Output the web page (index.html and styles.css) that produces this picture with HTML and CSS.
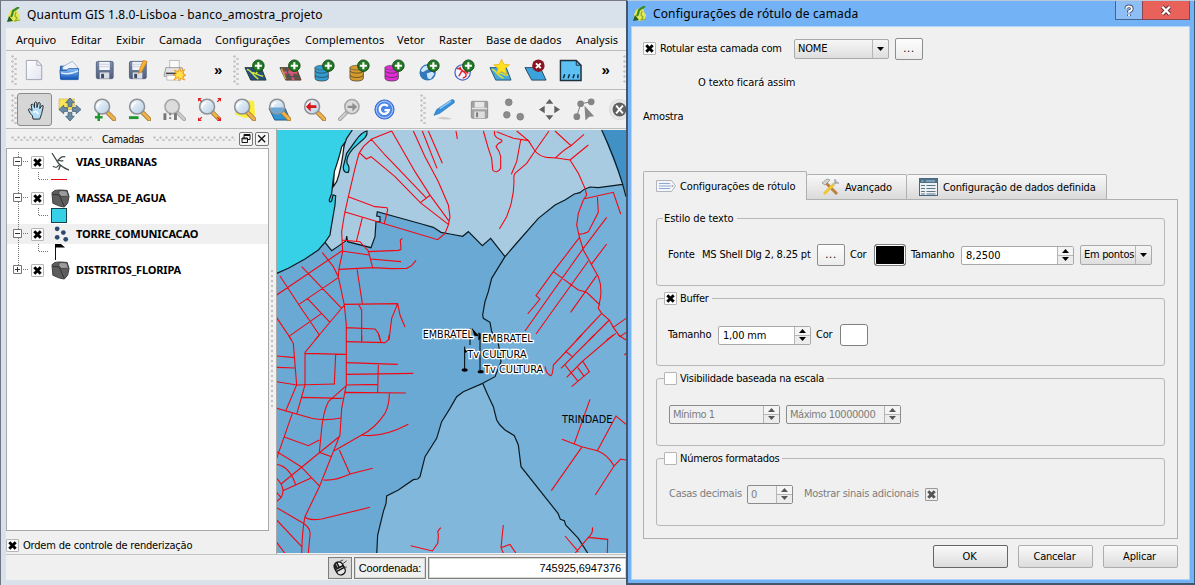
FILE: index.html
```html
<!DOCTYPE html>
<html lang="pt-BR">
<head>
<meta charset="utf-8">
<title>Quantum GIS 1.8.0-Lisboa - banco_amostra_projeto</title>
<link rel="stylesheet" href="styles.css">
</head>
<body>
<svg class="defs" width="0" height="0">
  <defs>
    <linearGradient id="gLens" x1="0" y1="0" x2="1" y2="1"><stop offset="0" stop-color="#fafdff"/><stop offset="1" stop-color="#b5cde4"/></linearGradient>
    <linearGradient id="gBlue" x1="0" y1="0" x2="0" y2="1"><stop offset="0" stop-color="#8fc3f5"/><stop offset="1" stop-color="#0b50b8"/></linearGradient>
    <linearGradient id="gDisk" x1="0" y1="0" x2="0" y2="1"><stop offset="0" stop-color="#7f90ae"/><stop offset="1" stop-color="#4b5c7d"/></linearGradient>
    <linearGradient id="gPage" x1="0" y1="0" x2="1" y2="1"><stop offset="0" stop-color="#fff"/><stop offset="1" stop-color="#e2e4ef"/></linearGradient>
    <symbol id="qgis" viewBox="0 0 14 16">
      <path d="M3 4 6 2 10 2 11 6 13 9 12 13 8 15 3 14 1 9Z" fill="#e6e85a"/>
      <path d="M12 0 9 2 6 4 5 8 4 10" fill="none" stroke="#3c8a26" stroke-width="2.2"/>
      <path d="M9 5 8 9 10 11 8 14 13 13" fill="none" stroke="#8fae2b" stroke-width="1.2"/>
      <path d="M0 15 2 9 6 14Z" fill="#245f22"/>
    </symbol>
    <symbol id="plus" viewBox="0 0 14 14"><circle cx="7" cy="7" r="6" fill="#237a24" stroke="#124713"/><path d="M7 3.3v7.4M3.3 7h7.4" stroke="#fff" stroke-width="2.2"/></symbol>
    <symbol id="db" viewBox="0 0 24 24">
      <path d="M2 9v11c0 4 14 4 14 0V9Z" fill="currentColor" stroke="#454545" stroke-width=".8"/>
      <path d="M2 12.5c2 3 12 3 14 0M2 17c2 3 12 3 14 0" fill="none" stroke="#333" stroke-width=".7"/>
      <ellipse cx="9" cy="9" rx="7" ry="2.4" fill="currentColor" stroke="#555" stroke-width=".7"/>
      <use href="#plus" x="9" y="0" width="14" height="14"/>
    </symbol>
    <symbol id="lens" viewBox="0 0 24 24">
      <path d="M15 15 22 22" stroke="#9c7a3c" stroke-width="4.6" stroke-linecap="round"/>
      <path d="M15.5 15.5 22 22" stroke="#f2b24a" stroke-width="3" stroke-linecap="round"/>
      <circle cx="9.5" cy="9" r="7.8" fill="url(#gLens)" stroke="#8e9296" stroke-width="1.6"/>
      <path d="M4.5 10a5 5 0 0 1 4-5" fill="none" stroke="#fff" stroke-width="1.6"/>
    </symbol>
    <symbol id="lensGrey" viewBox="0 0 24 24">
      <path d="M15 15 22 22" stroke="#a2a2a2" stroke-width="4" stroke-linecap="round"/>
      <path d="M16 16 22 22" stroke="#cfcfcf" stroke-width="2.2" stroke-linecap="round"/>
      <circle cx="9.5" cy="9" r="7.4" fill="#dcdcdc" stroke="#a6a6a6" stroke-width="1.6"/>
    </symbol>
    <symbol id="disk" viewBox="0 0 24 24">
      <rect x="3.5" y="2.500" width="17.500" height="18" rx="1.500" fill="url(#gDisk)" stroke="#55627c"/>
      <rect x="6.500" y="3" width="11" height="8.500" fill="#f3f5fa"/><path d="M7 5.500h10M7 8h10" stroke="#c8cedb"/>
      <rect x="7" y="14" width="10" height="6.500" fill="#d9dde6"/><rect x="8.500" y="15.500" width="3" height="4.500" fill="#3f4a62"/>
    </symbol>
    <symbol id="poly" viewBox="0 0 20 20">
      <path d="M1 4 4 1.500 9 1 17 1.500 19 8 17.500 15 14 19 9 18 2 15Z" fill="#5d5d5d" stroke="#3a3a3a"/>
      <path d="M9 1.500 16.500 2 18.500 7.500 11 8 8 5Z" fill="#9b9b9b" stroke="#3a3a3a" stroke-width=".8"/>
      <path d="M2 6Q9 5 10 9T14 18" fill="none" stroke="#2d2d2d"/>
    </symbol>
    <symbol id="cross" viewBox="0 0 9 9"><path d="M1.300 1.300 7.700 7.700M7.700 1.300 1.300 7.700" stroke="currentColor" stroke-width="2.900"/></symbol>
    <symbol id="up" viewBox="0 0 7 4"><path d="M0 4 3.500 0 7 4Z" fill="currentColor"/></symbol>
    <symbol id="down" viewBox="0 0 7 4"><path d="M0 0 3.500 4 7 0Z" fill="currentColor"/></symbol>
  </defs>
</svg>

<div class="desktop">
<main class="window">
  <header class="titlebar"><svg class="appicon" width="14" height="16"><use href="#qgis"/></svg><span class="wintitle">Quantum GIS 1.8.0-Lisboa - banco_amostra_projeto</span></header>
  <nav class="menubar"><span>Arquivo</span><span>Editar</span><span>Exibir</span><span>Camada</span><span>Configurações</span><span>Complementos</span><span>Vetor</span><span>Raster</span><span>Base de dados</span><span>Analysis</span></nav>

  <div class="toolbar">
    <i class="grip"></i>
    <span class="tool"><svg viewBox="0 0 24 24"><path d="M3.500 1.500h11l5 5v15h-16Z" fill="url(#gPage)" stroke="#a0a3b5"/><path d="M14.500 1.500v5h5Z" fill="#fff" stroke="#a0a3b5"/></svg></span>
    <span class="tool"><svg viewBox="0 0 24 24"><path d="M2.500 7.500h7l2 2h9v11h-18Z" fill="#2e74c8" stroke="#1d55a5"/><path d="M5 11 5 8 15 2.500 20 8V12Z" fill="#f1f5fb" stroke="#90a4c4" stroke-width=".8"/><path d="M2 12h7l2-2h10.500l-.5 11.500H3Z" fill="url(#gBlue)" stroke="#1d55a5" stroke-width=".8"/><path d="M3 14.500Q12 17 21 12.500" fill="none" stroke="#dcecff" stroke-width="1.500"/></svg></span>
    <span class="tool"><svg viewBox="0 0 24 24"><use href="#disk"/></svg></span>
    <span class="tool"><svg viewBox="0 0 24 24"><use href="#disk" x="-2"/><path d="M11 15 12 11 16 1.500 20 2.500 14.500 13Z" fill="#f6b53a" stroke="#d07f12" stroke-width=".8"/></svg></span>
    <span class="tool"><svg viewBox="0 0 24 24"><rect x="7" y="1.500" width="10" height="9" fill="#fafafa" stroke="#bbb"/><path d="M3 9h17l2 9H1Z" fill="#e4e4e4" stroke="#888" stroke-width=".8"/><path d="M3 15h14" stroke="#444" stroke-width="1.600"/><path d="M4 17h14v5H4Z" fill="#fff" stroke="#999" stroke-width=".6"/><path d="m17.500 9 1 4 4-2-2 4 3.500 2-3.500 1 2 4-4-2-1.500 3-1-4-4.500 3 2-4-3-1.500 3.500-1-2-4 4 2Z" fill="#ffe14a" stroke="#f09a1a" stroke-width="1"/></svg></span>
    <span class="more first">»</span>
    <i class="grip"></i>
    <span class="tool"><svg viewBox="0 0 24 24"><path d="M1 9h17l5 13H7Z" fill="#244f7c" stroke="#263b33"/><path d="M3 11c4 0 7 7 12 10M8 14c4 0 5 3 12 4M14 10l-1 6" fill="none" stroke="#d2e33c" stroke-width="1.600"/><use href="#plus" x="8" y="0" width="14" height="14"/></svg></span>
    <span class="tool"><svg viewBox="0 0 24 24"><path d="M1 9h17l5 13H7Z" fill="#73513b" stroke="#4c4236"/><path d="M5 14h14M11 9l4 13" stroke="#d6587b" stroke-width="2.600"/><path d="M7 18.500h14M7 9l5 13" stroke="#3f5560" stroke-width="1.300"/><path d="M2.500 10 7 21" stroke="#d3a85a" stroke-width="1.500"/><use href="#plus" x="9" y="0" width="14" height="14"/></svg></span>
    <span class="tool db-blue"><svg viewBox="0 0 24 24"><use href="#db" x="-1" width="24" height="24"/></svg></span>
    <span class="tool db-gold"><svg viewBox="0 0 24 24"><use href="#db" x="-1" width="24" height="24"/></svg></span>
    <span class="tool db-pink"><svg viewBox="0 0 24 24"><use href="#db" x="-1" width="24" height="24"/></svg></span>
    <span class="tool"><svg viewBox="0 0 24 24"><circle cx="9" cy="14" r="8.500" fill="#3378b8"/><path d="M2 12c2-5 6-6 8-4s-1 3-3 4-3 3-5 0ZM8 15l6-2 2 3-4 5-3-1Z" fill="#cfe6f7"/><use href="#plus" x="8" y="0" width="14" height="14"/></svg></span>
    <span class="tool"><svg viewBox="0 0 24 24"><circle cx="9" cy="14" r="8" fill="#f2f5ff" stroke="#4665c4" stroke-width="1.300"/><path d="M3 10c4-1 5 2 8 4s2 5-2 6M6 8l2 5-3 5M11 12l4 3" fill="none" stroke="#e8192c" stroke-width="1.500"/><use href="#plus" x="8" y="0" width="14" height="14"/></svg></span>
    <span class="tool"><svg viewBox="0 0 24 24"><path d="M1 9h17l5 13H7Z" fill="#45a9dd" stroke="#285774"/><path d="M3 11c4 0 6 7 12 9M9 14c4 0 5 3 11 3" fill="none" stroke="#d8e53e" stroke-width="1.600"/><path d="m13 0 2.500 5.500 6 .5-4.500 4 1.500 6-5.500-3-5 3 1.500-6L5 6l6-.5Z" fill="#ffe11f" stroke="#e9b51c" stroke-width=".8"/></svg></span>
    <span class="tool"><svg viewBox="0 0 24 24"><path d="M1 9h16l6 13H8Z" fill="#3aa3dd" stroke="#2b4658"/><circle cx="15" cy="7" r="6.500" fill="#8c1420"/><path d="m12.500 4.500 5 5M17.500 4.500l-5 5" stroke="#fff" stroke-width="2"/></svg></span>
    <span class="tool"><svg viewBox="0 0 24 24"><path d="M1.500 1.500H18l5 5v16H1.500Z" fill="#5cc0f3" stroke="#1c2f3a" stroke-width="1.500"/><path d="M18 1.500V6.500h5" fill="none" stroke="#1c2f3a"/><path d="M6 16l-1.500 4M11 16l-1.500 4M16 16l-1.500 4M20 16l-.5 4" stroke="#102f45" stroke-width="1.600"/></svg></span>
    <span class="more">»</span>
    <i class="grip"></i>
  </div>

  <div class="toolbar">
    <i class="grip"></i>
    <span class="tool pressed"><svg viewBox="0 0 24 24"><path d="M9 22Q9 18 6 16L4 12Q5 10 8 13L7 7Q8 5 10 8L10.500 10V5Q12 3 13 5V10L14.500 5Q16 4 16.500 6L16 11 18 8Q20 7 19.500 9.500L18 16 16 22Z" transform="translate(1.500 0)" fill="#b4dff8" stroke="#22262a" stroke-width="1"/><path d="M11 15c3-2 4 0 5 2" fill="none" stroke="#fff" stroke-width="1.500"/></svg></span>
    <span class="tool"><svg viewBox="0 0 24 24"><path d="M1 1h16v11H1Z" fill="#fbe35a" stroke="#b99a2b" stroke-width=".7" stroke-dasharray="2 1"/><path d="m12.500 0 4.500 5h-2.500v4h-4V5H8ZM12.500 24l4.500-5h-2.500v-4h-4v4H8ZM1 12l5-4.500V10h4v4H6v2.500ZM24 12l-5-4.500V10h-4v4h4v2.500Z" fill="#6b8ba4" stroke="#3f5d75" stroke-width=".8"/></svg></span>
    <span class="tool"><svg viewBox="0 0 24 24"><use href="#lens"/><path d="M6 16v8M2 20h8" stroke="#22962f" stroke-width="2.600"/></svg></span>
    <span class="tool"><svg viewBox="0 0 24 24"><use href="#lens"/><path d="M1 20.500h10" stroke="#22962f" stroke-width="3"/></svg></span>
    <span class="tool"><svg viewBox="0 0 24 24"><use href="#lensGrey"/><path d="M2 16v7M13 16v7" stroke="#777" stroke-width="3"/><path d="M7.500 16v2M7.500 20v2" stroke="#777" stroke-width="2"/></svg></span>
    <span class="tool"><svg viewBox="0 0 24 24"><use href="#lens"/><path d="M1 1l3 3M23 1l-3 3M1 23l3-3M23 23l-3-3" stroke="#e12020" stroke-width="1.300"/><path d="M0 0h4L0 4ZM24 0v4l-4-4ZM0 24v-4l4 4ZM24 24h-4l4-4Z" fill="#e12020"/></svg></span>
    <span class="tool"><svg viewBox="0 0 24 24"><path d="M6 2 22 3 23 18 13 21 2 17 2 8Z" fill="#faee36"/><use href="#lens"/></svg></span>
    <span class="tool"><svg viewBox="0 0 24 24"><path d="M1 11h17l5 12H7Z" fill="#2b95d6" stroke="#285a7c"/><use href="#lens"/><path d="M2.500 10h14Q15 16 9.500 16T2.500 10Z" fill="#6ea6d4"/></svg></span>
    <span class="tool"><svg viewBox="0 0 24 24"><use href="#lens"/><path d="m3 9 5-5v3.500h6v3H8V14Z" fill="#d61717"/></svg></span>
    <span class="tool"><svg viewBox="0 0 24 24"><g transform="matrix(-1 0 0 1 24 0)"><use href="#lensGrey"/></g><path d="m20 9-5-4v3h-5v2.500h5V14Z" fill="#8c8c8c"/></svg></span>
    <span class="tool"><svg viewBox="0 0 24 24"><circle cx="12" cy="12" r="10" fill="#4b85e6" stroke="#3a66cf"/><circle cx="12" cy="12" r="8.500" fill="none" stroke="#b4d0ff" stroke-width="1"/><path d="M15.500 8.700A4.800 4.800 0 1 0 16.500 12.700H12" fill="none" stroke="#fff" stroke-width="2.400"/></svg></span>
    <i class="grip wide"></i>
    <span class="tool"><svg viewBox="0 0 24 24"><path d="M4 21q9-3 16 1-8 1-16-1Z" fill="#ccc"/><path d="M1 18 4 12 19 2Q23 1 22 5L7 16Z" fill="#3491dd" stroke="#1d6db2" stroke-width=".7"/><path d="M7 11 19 3" stroke="#8cc8f3" stroke-width="1.600"/></svg></span>
    <span class="tool"><svg viewBox="0 0 24 24"><rect x="3.500" y="3.500" width="17" height="17.500" rx="1" fill="#a2a2a2" stroke="#8c8c8c"/><rect x="7" y="4" width="10" height="6" fill="#e6e6e6"/><path d="M4 11h16" stroke="#e4e4e4" stroke-width="1.500"/><rect x="6.500" y="14" width="11" height="7" fill="#dedede"/><path d="M9.500 15v5" stroke="#777" stroke-width="2"/></svg></span>
    <span class="tool"><svg viewBox="0 0 24 24"><g fill="#8c8c8c" stroke="#757575" stroke-width=".6"><circle cx="6" cy="4.500" r="3.600"/><circle cx="4" cy="17.500" r="3.500"/><circle cx="18" cy="19.500" r="3.600"/></g></svg></span>
    <span class="tool"><svg viewBox="0 0 24 24"><path d="m12 1 4 5H8ZM12 23l4-5H8ZM1 12l6-4v8ZM23 12l-6-4v8Z" fill="#606060"/></svg></span>
    <span class="tool"><svg viewBox="0 0 24 24"><path d="M4 19 8 6 19 4" fill="none" stroke="#777"/><g fill="#858585"><circle cx="8" cy="6" r="3.500"/><circle cx="19" cy="4" r="3.500"/><circle cx="4" cy="19.500" r="3.500"/><path d="m12 8 10 11-5 .5-4 4Z"/></g></svg></span>
    <span class="tool"><svg viewBox="0 0 24 24"><circle cx="12" cy="12" r="10.500" fill="#e6e6e6" stroke="#d6d6d6"/><circle cx="12" cy="12" r="7.200" fill="#606060"/><path d="m8.500 8 7 8M15.500 8l-7 8" stroke="#fff" stroke-width="2"/></svg></span>
  </div>

  <div class="workspace">
    <aside class="dock">
      <div class="dockhead"><i class="dots"></i><span>Camadas</span><i class="dots"></i>
        <b class="dockbtn"><svg viewBox="0 0 12 12"><path d="M4 1.500h6v5H4ZM4 2.500h6" fill="none" stroke="#111"/><path d="M2 5h5.500v4.500H2ZM2 5.800h5" fill="#f4f4f4" stroke="#111"/></svg></b>
        <b class="dockbtn"><svg viewBox="0 0 12 12"><path d="m2.200 2.200 7 7M9.200 2.200l-7 7" stroke="#111" stroke-width="1.300"/></svg></b>
      </div>
      <div class="tree">
        <div class="node"><svg class="twig" width="24" height="20"><path d="M11.500 0V20M12 9.500H22" class="dot"/><path d="M6.500 5.500h8v8h-8Z" class="box"/><path d="M8 9.500h5" class="sign"/></svg><b class="check"><svg><use href="#cross"/></svg></b><svg class="licon" viewBox="0 0 20 20"><path d="M1 0 6 8Q9 14 19 18M7 9Q10 3 15 4M7 7Q9 9 13 8M9 11Q7 17 2 14M10 13 8 18" fill="none" stroke="#3e4b48" stroke-width="1.300"/></svg><span>VIAS_URBANAS</span></div>
        <div class="legend"><svg width="60" height="16"><path d="M11.500 0V16M31.500 0V7.500H42" class="dot"/><path d="M44 7.500h16" stroke="#f00014" stroke-width="1"/></svg></div>
        <div class="node"><svg class="twig" width="24" height="20"><path d="M11.500 0V20M12 9.500H22" class="dot"/><path d="M6.500 5.500h8v8h-8Z" class="box"/><path d="M8 9.500h5" class="sign"/></svg><b class="check"><svg><use href="#cross"/></svg></b><svg class="licon"><use href="#poly"/></svg><span>MASSA_DE_AGUA</span></div>
        <div class="legend"><svg width="60" height="16"><path d="M11.500 0V16M31.500 0V7.500H42" class="dot"/><rect x="44.500" y=".5" width="15" height="14" fill="#36d0e7" stroke="#17424a"/></svg></div>
        <div class="node selected"><svg class="twig" width="24" height="20"><path d="M11.500 0V20M12 9.500H22" class="dot"/><path d="M6.500 5.500h8v8h-8Z" class="box"/><path d="M8 9.500h5" class="sign"/></svg><b class="check"><svg><use href="#cross"/></svg></b><svg class="licon" viewBox="0 0 20 20"><g fill="#2b4a6d"><circle cx="6.500" cy="4" r="2.500"/><circle cx="13" cy="8" r="2.500"/><circle cx="6.500" cy="13" r="2.500"/><circle cx="15.500" cy="15" r="2.500"/></g></svg><span>TORRE_COMUNICACAO</span></div>
        <div class="legend"><svg width="60" height="16"><path d="M11.500 0V16M31.500 0V7.500H42" class="dot"/><path d="M48.500 0V16" stroke="#111"/><path d="M48 0h6l4 3.500h-10Z" fill="#000"/></svg></div>
        <div class="node"><svg class="twig" width="24" height="20"><path d="M11.500 0V10M12 9.500H22" class="dot"/><path d="M6.500 5.500h8v8h-8Z" class="box"/><path d="M8 9.500h5M10.500 7v5" class="sign"/></svg><b class="check"><svg><use href="#cross"/></svg></b><svg class="licon"><use href="#poly"/></svg><span>DISTRITOS_FLORIPA</span></div>
      </div>
      <div class="order"><b class="check"><svg><use href="#cross"/></svg></b><span>Ordem de controle de renderização</span></div>
    </aside>
    <div class="splitter"></div>
    <svg class="map" viewBox="6 15 1050 1269" width="350" height="423">
      <rect x="3" y="15" width="1060" height="1269" fill="#69a9d4"/>
      <path d="M160 0H1060V205L1043 178 970 188 945 186 930 192 900 207 840 240 790 280 720 360 690 395 647 340 622 362 580 320 563 334 525 327 498 322 475 307 440 297 307 260 305 273 315 275 315 290 303 290 300 335 288 368 218 350 170 377 150 352 120 340Z" fill="#a9cbe2"/>
      <path d="M690 395Q750 320 790 280L840 240 900 207 945 186 970 188 1043 178 1060 205V1290H938L910 1240 870 1190 860 1180 738 1025 730 960 720 935 690 915 670 900 655 845 623 775 660 755 678 710 670 655 650 620 645 592 625 580 623 570 630 530 640 500 650 460Z" fill="#74b0d7"/>
      <path d="M623 775 655 845 670 900 690 915 720 935 730 960 738 1025 860 1180 870 1190 910 1240 938 1290H305L308 1230 325 1160 335 1113 415 1065 435 1055 450 995 485 940 500 890 525 850 545 820 565 800Z" fill="#80b7db"/>
      <path d="M980 15H1060V220L1043 178Z" fill="#4191c6"/>
      <path d="M3 15H232L215 40 208 60 190 110 175 160 170 205 180 210 180 240 168 310 165 330 150 352 130 375 90 402 40 430 3 446Z" fill="#36d0e7"/>
      <g fill="none" stroke="#0c1a20" stroke-width="3.600">
        <path d="M232 15 215 40 208 60 190 110 175 160 170 205 163 224Q162 235 170 228L174 210 182 212 180 240 168 310 165 330 150 352 130 375 90 402 40 430 3 446"/>
        <path d="M208 55Q200 130 185 170L175 185 178 140Q195 90 200 65Z" fill="#fffaf2"/>
        <path d="M276 18Q260 20 240 50L215 85 205 125Q204 145 220 142 226 125 216 115 212 95 235 70L270 38Q278 28 276 18Z" fill="#36d0e7"/>
        <path d="M150 352 170 377 213 348 215 333 218 350 288 368 300 335 303 290 315 290 315 275 305 273 307 260 440 297 475 307 498 322 525 327 563 334 580 320 622 362 647 340 690 395"/>
        <path d="M980 15Q1020 100 1043 178L1053 215M1043 178 970 188 945 186Q930 190 915 203L898 207 870 225 840 240 790 280 720 360 690 395 650 460 640 500 630 530 623 570 625 580 645 592 650 620 670 655 678 710 660 755 623 775"/>
        <path d="M623 775 636 805 655 845 665 885 675 900 690 915 718 932 730 960 738 1025 849 1165 856 1183 868 1187 872 1200 910 1240 938 1284"/>
        <path d="M623 775 565 800 545 815 525 850 500 890 485 940 450 995 435 1055 428 1062 415 1064 370 1095 335 1113 333 1135 325 1160 308 1230 305 1290"/>
      </g>
      <g fill="none" stroke="#f30812" stroke-width="3.300">
        <path d="M350 18 290 42 265 65 252 85 240 130 220 215 208 270 200 320 203 380 192 430 190 455 208 540 214 600V780M252 82 274 102 288 95 360 155 436 233 520 298M288 42 330 90 455 220M436 233 466 210M350 18 420 140 466 212 523 290M415 18 450 95 490 170 520 240 525 275 520 300 510 325 488 344 208 260M442 18 486 130M460 18 502 115M220 215 300 245 336 248 338 255 328 295M262 278 244 350M200 345 255 350 280 378 293 428M200 378 283 390M278 380 370 376 378 373 376 345 382 340M286 402 378 410M192 433 293 428 350 431 395 430 410 422 423 406M142 383 175 425 190 455M5 510 200 378M15 453 72 540 133 630M80 425 200 550M72 538 190 458M97 520 165 592M208 540 120 645M45 632 140 565M5 578 50 645M246 432 262 535M208 538 368 536 375 570 390 606M368 536 350 580 342 645M250 537 260 555V645M214 608 300 612 310 625 315 645"/>
        <path transform="translate(525)" d="M18 18 22 42M100 18 115 70 125 100 128 135Q140 148 152 130V95Q150 80 138 65 142 55 155 50 158 45 148 42 130 35 134 18M140 20 190 40 235 47 200 18M235 47 255 78Q270 95 290 97L320 99 360 105 385 145 405 190 410 210 400 225 385 265 380 300 388 335 400 375 445 455Q455 480 452 515L445 550 455 565 478 585 490 607 510 635 528 622M212 45 200 110 184 148M297 18 255 78 230 115 195 145Q190 150 192 170L190 200 183 238 170 275 148 312M315 18 363 62 402 28M315 100Q340 75 363 62M360 105 415 60M400 222 490 202 512 267M442 212 445 262 415 320Q400 328 385 328M388 338 310 440 258 512 270 522 233 567M470 277 400 370 225 618M415 408 258 627M470 357 424 418M440 452 362 562M310 440 385 495 410 502 450 540M455 565 380 645M478 585 418 645M490 607 528 580M470 645 498 625"/>
        <path transform="translate(0 630)" d="M214 150 200 220 195 300 133 455 90 545Q82 580 80 655M40 0 55 25 65 150 32 228M133 0 90 52V150L65 238M90 55 214 58M182 58 178 147M5 140 65 150 180 147M5 63 58 68M5 97 60 99M214 20 330 23 340 15 342 0M260 0V20M312 0 318 22M214 83 368 88M214 118 415 115M310 90 308 172M214 150 308 148M208 172 393 174M343 174Q343 210 330 235 300 280 260 300L178 347M260 300Q320 310 400 268M214 152 160 200Q145 230 140 280L133 352 170 365M78 187 203 190M5 220 110 250Q150 258 197 249M52 235 5 370M28 306 100 332 133 315M5 350Q40 370 78 395L135 455M195 303 18 447M193 345 225 417M145 435Q180 438 225 417L293 400M5 388Q45 395 62 450M22 468 110 428M5 430Q35 460 18 488L5 500M3 470 18 487M90 545Q100 558 140 552L285 517M5 518 85 565Q108 580 105 600L100 655M5 555 80 635M5 622 30 655M407 632 472 648 488 625Q492 600 488 590L497 578"/>
        <path transform="translate(525 630)" d="M395 0 310 90Q308 120 303 122 290 120 285 95M433 0 333 100M346 48 370 67M490 0 398 78 418 110 365 155M398 78 350 127M345 90 385 140M383 97 403 125M505 0 528 15M528 55l-5 5M420 193 373 325M336 313 395 335 442 347Q475 360 492 393M528 268 498 243 442 347M395 337 304 467M436 480 492 393 512 372 528 375M160 570 153 638 160 655M153 638 180 628 198 655M345 603 385 650M427 577Q430 595 415 607L375 655M415 607 473 613 472 655"/>
      </g>
      <path d="M569 665V735M615 625V735M585 610V660" stroke="#000" stroke-width="3"/>
      <ellipse cx="569" cy="735" rx="9" ry="5"/><ellipse cx="617" cy="740" rx="9" ry="5"/>
      <g class="maplabel">
        <text x="443" y="640" textLength="151" lengthAdjust="spacingAndGlyphs">EMBRATEL</text>
        <text x="621" y="651" textLength="152" lengthAdjust="spacingAndGlyphs">EMBRATEL</text>
        <text x="577" y="699" textLength="178" lengthAdjust="spacingAndGlyphs">Tv CULTURA</text>
        <text x="627" y="744" textLength="178" lengthAdjust="spacingAndGlyphs">Tv CULTURA</text>
        <text x="861" y="894" textLength="151" lengthAdjust="spacingAndGlyphs" class="plain">TRINDADE</text>
      </g>
      <path d="M590 608 606 626 614 634 598 632ZM610 622v24l6-4v-16ZM569 672l9 8-9 4Z"/>
    </svg>
  </div>
  <footer class="status">
    <b class="mouse"><svg viewBox="0 0 20 20"><g transform="rotate(-28 10 10)"><rect x="5" y="3" width="10" height="15" rx="5" fill="#e6e6e6" stroke="#111" stroke-width="1.500"/><path d="M5 9.500h10M5 12h10M10 3v6" stroke="#111" stroke-width="1.600"/><rect x="5.500" y="4" width="3" height="5" fill="#222"/></g><path d="M10 3 14 1M14 5 18 2M15 9h3" stroke="#333"/></svg></b>
    <span class="coordlabel">Coordenada:</span><span class="coord">745925,6947376</span>
  </footer>
</main>

<section class="dialog">
  <header class="dtitle"><svg class="appicon" width="14" height="16"><use href="#qgis"/></svg><span class="wintitle dname">Configurações de rótulo de camada</span>
    <b class="help"><svg viewBox="0 0 12 14"><path d="M3 5Q3 2.500 6 2.500T9 5Q9 7 6 8V9.500M6 11v2" fill="none" stroke="#3f4b60" stroke-width="3.800"/><path d="M3 5Q3 2.500 6 2.500T9 5Q9 7 6 8V9.500M6 11v2" fill="none" stroke="#fff" stroke-width="1.900"/></svg></b>
    <b class="close"><svg viewBox="0 0 12 14"><path d="m2 3 8 8M10 3l-8 8" stroke="#5d3038" stroke-width="4.400"/><path d="m2 3 8 8M10 3l-8 8" stroke="#fff" stroke-width="2.500"/></svg></b>
  </header>
  <div class="dbody">
    <div class="row top"><b class="check"><svg><use href="#cross"/></svg></b><span class="tight">Rotular esta camada com</span><span class="combo"><em>NOME</em><i><svg width="7" height="4"><use href="#down"/></svg></i></span><span class="btn small">...</span></div>
    <p class="sample">O texto ficará assim</p>
    <p class="amostra">Amostra</p>
    <div class="tabs">
      <div class="tab active"><svg width="20" height="14" viewBox="0 0 20 14"><path d="M.5 1.500h15l4 5.500-4 5.500H.5Z" fill="#f4f5f8" stroke="#b2b5bd"/><path d="M3 4.500h11M3 7h12M3 9.500h11" stroke="#8ca8d6"/><circle cx="16.500" cy="7" r="1" fill="#aaa"/></svg><span class="t1">Configurações de rótulo</span></div>
      <div class="tab"><svg width="20" height="19" viewBox="0 0 20 19"><path d="M4 4 16 16" stroke="#b98342" stroke-width="3"/><path d="M1 5 6 1 9 2 4 7Z" fill="#d5d5d5" stroke="#8d8d8d" stroke-width=".7"/><path d="M3 16 13 6" stroke="#efc63a" stroke-width="3"/><path d="M12 7 16 3" stroke="#b8bec4" stroke-width="2"/><path d="M14 1v4h4" fill="none" stroke="#a5abb0" stroke-width="1.500"/></svg><span class="t2">Avançado</span></div>
      <div class="tab"><svg width="19" height="18" viewBox="0 0 19 18"><rect x=".5" y=".5" width="18" height="17" fill="#eef1f4" stroke="#456780"/><path d="M1 3h17" stroke="#50738b" stroke-width="4"/><path d="M2.500 3h2M7 3h9" stroke="#abcadd"/><path d="M2 7.500h4M7.500 7.500h9M2 10.500h4M7.500 10.500h9M2 13.500h4M7.500 13.500h9M2 16h4M7.500 16h9" stroke="#587487"/></svg><span class="t3">Configuração de dados definida</span></div>
    </div>
    <div class="page">
      <section class="group">
        <h3 class="plain"><span>Estilo de texto</span></h3>
        <div class="row g1"><span>Fonte</span><span class="font">MS Shell Dlg 2, 8.25 pt</span><span class="btn small">...</span><span>Cor</span><span class="color black"></span><span>Tamanho</span><span class="spin"><em class="wide">8,2500</em><i><svg width="7" height="4"><use href="#up"/></svg><svg width="7" height="4"><use href="#down"/></svg></i></span><span class="combo"><em>Em pontos</em><i><svg width="7" height="4"><use href="#down"/></svg></i></span></div>
      </section>
      <section class="group">
        <h3><b class="check"><svg><use href="#cross"/></svg></b><span>Buffer</span></h3>
        <div class="row g2"><span>Tamanho</span><span class="spin"><em>1,00 mm</em><i><svg width="7" height="4"><use href="#up"/></svg><svg width="7" height="4"><use href="#down"/></svg></i></span><span>Cor</span><span class="color"></span></div>
      </section>
      <section class="group">
        <h3><b class="check"></b><span>Visibilidade baseada na escala</span></h3>
        <div class="row g3 off"><span class="spin"><em>Mínimo 1</em><i><svg width="7" height="4"><use href="#up"/></svg><svg width="7" height="4"><use href="#down"/></svg></i></span><span class="spin"><em>Máximo 10000000</em><i><svg width="7" height="4"><use href="#up"/></svg><svg width="7" height="4"><use href="#down"/></svg></i></span></div>
      </section>
      <section class="group">
        <h3><b class="check"></b><span>Números formatados</span></h3>
        <div class="row g4 off"><span>Casas decimais</span><span class="spin"><em>0</em><i><svg width="7" height="4"><use href="#up"/></svg><svg width="7" height="4"><use href="#down"/></svg></i></span><span>Mostrar sinais adicionais</span><b class="check"><svg><use href="#cross"/></svg></b></div>
      </section>
    </div>
    <div class="actions"><span class="btn default">OK</span><span class="btn">Cancelar</span><span class="btn">Aplicar</span></div>
  </div>
</section>
</div>
</body>
</html>
```
FILE: styles.css
```css
* { box-sizing: border-box; }
body { margin: 0; font: 11px/14px "DejaVu Sans Condensed", "DejaVu Sans", sans-serif; font-stretch: condensed; letter-spacing: -0.19px; color: #000; }
i, em, b { font-style: normal; font-weight: normal; }
p, h3 { margin: 0; font: inherit; }
svg { display: block; flex: none; }
span { white-space: nowrap; }
.defs { position: absolute; }
.desktop { position: relative; width: 1195px; height: 585px; overflow: hidden; background: #d9e1ea; }

/* Main window */
.window { width: 640px; height: 585px; padding-left: 5px; border-left: 1px solid #6f7680; border-top: 1px solid #777984; background: #d9e1ea; display: flex; flex-direction: column; }
.titlebar { height: 27px; flex: none; display: flex; align-items: center; gap: 6px; padding-left: 1px; }
.wintitle { font: 12px/16px "Noto Sans", sans-serif; letter-spacing: 0.12px; }
.menubar { height: 23px; flex: none; background: #f0f0f0; border-bottom: 1px solid #bcbcbc; display: grid; grid-template-columns: 55px 45px 43px 56px 90px 92px 42px 47px 90px 60px; padding: 2px 0 0 10px; align-items: center; font-family: "Noto Sans", sans-serif; letter-spacing: 0.04px; }
.toolbar { height: 39px; flex: none; background: #f0f0f0; border-bottom: 1px solid #bcbcbc; display: flex; align-items: center; padding-left: 5px; }
.grip { width: 6px; height: 30px; flex: none; background: radial-gradient(circle at 1.500px 1.500px, #c8c8c8 1px, transparent 1.500px) 0 0 / 6px 5px, radial-gradient(circle at 4.500px 4px, #c8c8c8 1px, transparent 1.500px) 0 0 / 6px 5px; }
.grip.wide { margin: 0 1px 0 18px; }
.tool { width: 35px; height: 33px; flex: none; display: flex; align-items: center; justify-content: center; }
.tool svg { width: 23px; height: 23px; }
.pressed { border: 1px solid #8b8b8b; border-radius: 3px; background: #d6d6d6; }
.db-blue { color: #2e9bd2; }
.db-gold { color: #d69b2b; }
.db-pink { color: #e22bd7; }
.more { width: 35px; flex: none; text-align: center; font: bold 15px/20px "Liberation Sans", sans-serif; }
.more.first { width: 41px; padding-left: 11px; }
.more + .grip { margin: 0 -1px 0 0; }
.workspace { height: 425px; flex: none; background: #f0f0f0; display: flex; }
.dock { width: 263px; display: flex; flex-direction: column; }
.dockhead { height: 19px; flex: none; display: flex; align-items: center; gap: 2px; padding-left: 4px; }
.dockhead span { width: 56px; text-align: center; font-size: 10.500px; letter-spacing: -0.3px; }
.dots { width: 82px; height: 6px; background: radial-gradient(circle at 1.500px 1.500px, #cacaca 1px, transparent 1.500px) 0 0 / 6px 6px, radial-gradient(circle at 4.500px 4px, #cacaca 1px, transparent 1.500px) 0 0 / 6px 6px; }
.dots:first-child { margin-left: 1px; }
.dots + .dockbtn { margin-left: 2px; }
.dockbtn { width: 14px; height: 14px; flex: none; border: 1px solid #777; border-radius: 2px; background: #f7f7f7; }
.tree { height: 383px; flex: none; border: 1px solid #a9a9a9; background: #fff; padding-top: 3px; }
.node { height: 20px; display: flex; align-items: center; font: bold 11px/14px "Noto Sans", sans-serif; letter-spacing: -0.16px; }
.node.selected { background: #f0f0f0; }
.node .licon { width: 19px; height: 19px; margin: 0 6px 0 7px; }
.legend { height: 16px; }
.dot { fill: none; stroke: #777; stroke-dasharray: 1 1; }
.box { fill: #fff; stroke: #777; }
.sign { stroke: #333; }
.check { width: 13px; height: 13px; flex: none; border: 1px solid #b5b5b5; border-radius: 1px; background: #fdfdfd; display: flex; align-items: center; justify-content: center; }
.check svg { width: 9px; height: 9px; }
.order { height: 23px; padding-top: 6px; display: flex; align-items: center; gap: 4px; }
.splitter { width: 8px; flex: none; border-right: 1px solid #aaa; background: linear-gradient(#f0f0f0, #f0f0f0) 0 0 / 7px 140px no-repeat, linear-gradient(#f0f0f0, #f0f0f0) 0 100% / 7px 145px no-repeat, radial-gradient(circle at 3px 2px, #c2c2c2 1px, transparent 1.500px) 0 0 / 6px 5px repeat-y #f0f0f0; }
.map { margin-top: 1px; }
.maplabel text { font: 33px "DejaVu Sans Condensed", sans-serif; fill: #000; paint-order: stroke; stroke: #fff; stroke-width: 8px; stroke-linejoin: round; letter-spacing: 0; }
.maplabel .plain { stroke: none; font-size: 31px; }
.status { height: 26px; flex: none; background: #f0f0f0; border-top: 1px solid #c4c4c4; display: flex; align-items: center; padding-left: 322px; gap: 2px; }
.mouse, .coordlabel, .coord { height: 22px; border: 1px solid #7e7e7e; box-shadow: inset 0 0 0 1px #d8d8d8; }
.mouse { width: 24px; background: #ddd; padding: 1px; }
.mouse svg { width: 19px; height: 18px; }
.coordlabel { width: 72px; line-height: 20px; text-align: center; font-family: "Liberation Sans", sans-serif; letter-spacing: -0.1px; }
.coord { width: 199px; margin-left: 0; background: #fff; line-height: 20px; text-align: right; padding-right: 5px; font-family: "Liberation Sans", sans-serif; letter-spacing: -0.08px; }

/* Label settings dialog */
.dialog { position: absolute; left: 626px; top: 0; width: 569px; height: 585px; background: #73b2f4; border: 1px solid #44566b; border-top-color: #b9cbdc; border-width: 1px 1px 2px 2px; padding: 0 4px 3px 3px; display: flex; flex-direction: column; }
.dtitle { height: 25px; flex: none; display: flex; align-items: center; gap: 6px; padding-left: 2px; }
.dname { flex: 1; letter-spacing: 0.14px; }
.help, .close { height: 19px; align-self: flex-start; display: flex; align-items: center; justify-content: center; border: 1px solid #44668c; border-top: 0; }
.help svg, .close svg { width: 12px; height: 13px; }
.help { width: 28px; margin-right: -7px; background: #8dbff6; }
.close { width: 48px; background: #e86259; border-color: #8a4550; }
.dbody { flex: 1; background: #f0f0f0; border: 1px solid #b1d4fa; padding: 10px 11px 0; display: flex; flex-direction: column; }
.row { display: grid; align-items: center; }
.top { grid-template-columns: 17px 134px 101px 28px; height: 24px; }
.top .check { margin-top: -1px; }
.tight { letter-spacing: -0.22px; }
.combo { height: 20px; width: 95px; border: 1px solid #a9a9a9; border-radius: 2px; background: linear-gradient(#f6f6f6, #dedede); display: flex; }
.combo em { flex: 1; min-width: 0; overflow: hidden; padding-left: 3px; line-height: 18px; }
.combo i { width: 16px; border-left: 1px solid #b5b5b5; display: flex; align-items: center; justify-content: center; }
.btn { width: 75px; height: 23px; border: 1px solid #adadad; border-radius: 2px; background: linear-gradient(#fafafa, #dcdcdc); text-align: center; line-height: 22px; padding-right: 2px; }
.btn.small { width: 28px; height: 22px; padding: 0; border-color: #8d8d8d; line-height: 20px; letter-spacing: 0.7px; background: linear-gradient(#fdfdfd, #ececec); }
.btn.default { border-color: #666; }
.sample { margin: 15px 0 0 55px; letter-spacing: -0.1px; text-shadow: 0 0 2px #fff, 0 0 2px #fff; }
.amostra { margin-top: 20px; }
.tabs { display: flex; align-items: flex-end; margin-top: 47px; height: 28px; flex: none; }
.tab { height: 26px; margin-bottom: -1px; border: 1px solid #b0b0b0; border-left: 0; border-radius: 2px 2px 0 0; background: linear-gradient(#f8f8f8, #dadada); display: flex; align-items: center; width: 100px; padding-left: 14px; gap: 4px; }
.tab:nth-child(3) { width: 200px; padding-left: 12px; gap: 5px; }
.tab.active { width: 164px; height: 29px; border: 1px solid #b0b0b0; border-bottom: 0; background: #f0f0f0; z-index: 1; padding-left: 12px; }
.tab span { padding-top: 1px; }
.t1 { letter-spacing: -0.13px; }
.t2, .t3 { letter-spacing: -0.16px; }
.page { width: 535px; height: 340px; flex: none; border: 1px solid #b0b0b0; padding: 18px 12px 0; display: flex; flex-direction: column; gap: 12px; }
.group { height: 68px; flex: none; border: 1px solid #b8b8b8; border-radius: 3px; padding: 0 11px; }
.group h3 { display: flex; align-items: center; gap: 3px; height: 14px; width: max-content; background: #f0f0f0; margin: -8px 0 0 -4px; padding-right: 3px; letter-spacing: -0.26px; }
.group h3.plain { margin-left: -5px; letter-spacing: -0.1px; padding-left: 1px; }
.group h3 span { padding-top: 2px; }
.group .row { height: 22px; margin-top: 19px; }
.group .g3, .group .g4 { margin-top: 18px; }
.g1 { grid-template-columns: 34px 115px 33px 24px 37px 50px 119px 72px; }
.g1 .combo { width: 72px; }
.g1 .combo em { letter-spacing: -0.3px; }
.g2 { grid-template-columns: 50px 98px 24px 28px; }
.group .g3 { grid-template-columns: 117px 115px; padding-left: 1px; }
.g4 { grid-template-columns: 79px 57px 121px 13px; letter-spacing: -0.28px; }
.g4 > span:first-child { padding-left: 1px; }
.g1 > .spin { width: 113px; }
.g2 > .spin { width: 93px; }
.g3 > .spin:first-child { width: 111px; }
.g4 > .spin { width: 46px; }
.color { width: 28px; height: 22px; border: 1px solid #808080; border-radius: 3px; background: #fff; }
.color.black { width: 32px; background: #000; box-shadow: inset 0 0 0 1px #fff; }
.spin { height: 19px; border: 1px solid #a9a9a9; border-radius: 2px; background: #fff; display: flex; }
.spin em { flex: 1; padding-left: 4px; line-height: 18px; }
.spin em.wide { letter-spacing: 0; }
.spin i { width: 16px; flex: none; border-left: 1px solid #b5b5b5; background: linear-gradient(#f4f4f4 48%, #b5b5b5 49%, #b5b5b5 53%, #ececec 54%); display: flex; flex-direction: column; align-items: center; justify-content: space-around; }
.off { color: #7d7d7d; }
.off .spin { border-color: #8c8c8c; background: #f0f0f0; }
.off .spin em { padding-left: 3px; letter-spacing: -0.48px; }
.off .spin i { color: #555; }
.off .check { background: #eee; border-color: #999; color: #555; }
.actions { display: flex; justify-content: flex-end; gap: 10px; margin: 6px 0 0 0; }
```
